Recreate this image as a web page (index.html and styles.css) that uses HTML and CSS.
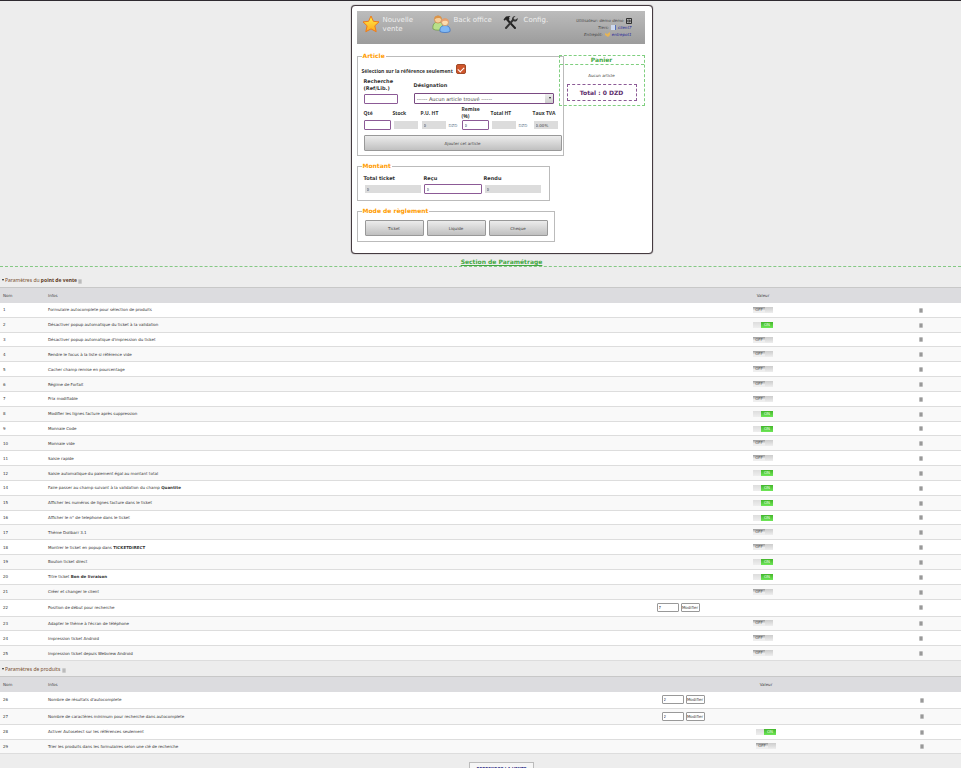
FILE: index.html
```html
<!DOCTYPE html>
<html lang="fr">
<head>
  <meta charset="UTF-8">
  <meta name="viewport" content="width=device-width, initial-scale=1.0">
  <title>Point de vente</title>
  <link rel="stylesheet" href="styles.css">
</head>
<body>

<main class="caisse">
  <header class="menu">
    <a class="menu-link menu-new" href="#">
      <svg width="18" height="18" viewBox="0 0 18 18">
        <defs>
          <linearGradient id="star" x1="0" y1="0" x2="0" y2="1">
            <stop offset="0" stop-color="#fff04a"/>
            <stop offset="1" stop-color="#ffa81c"/>
          </linearGradient>
        </defs>
        <path d="M9 1l2.4 5.3 5.6.6-4.2 3.9 1.4 5.9L9 13.9l-5.2 2.8 1.3-5.9L1 6.9l5.6-.6z" fill="url(#star)" stroke="#ee7a1a" stroke-width="1" stroke-linejoin="round"/>
      </svg>
      <span>Nouvelle vente</span>
    </a>
    <a class="menu-link menu-office" href="#">
      <svg width="19" height="18" viewBox="0 0 19 18">
        <path d="M1 14c-.6-4 1-7 5-7s5 2 5 7c-2 1.600-8 1.600-10 0z" fill="#b9e08a" stroke="#6c9a45" stroke-width=".7"/>
        <circle cx="6" cy="4.500" r="3.600" fill="#f6cf9c" stroke="#c98545" stroke-width=".7"/>
        <path d="M2.400 4.500C2 1 5 .3 7 .8s3 2 2.600 3.700C8 2.600 5 2.600 2.400 4.500z" fill="#dc9448"/>
        <path d="M8 16.500c-.6-4 1.500-6 5-6s5.500 2 5 6c-2 1.400-8 1.400-10 0z" fill="#7fb8f5" stroke="#3a6fc0" stroke-width=".7"/>
        <circle cx="13" cy="7.200" r="3.500" fill="#fbdcae" stroke="#cf8f55" stroke-width=".7"/>
        <path d="M9.500 7C9.500 4 12 3 14 3.500s3 2 2.500 3.500c-2-1.700-4.500-1.700-7 0z" fill="#e8a070"/>
      </svg>
      <span>Back office</span>
    </a>
    <a class="menu-link menu-config" href="#">
      <svg width="15" height="14" viewBox="0 0 15 14">
        <path d="M4.500 5l7.500 8" stroke="#222" stroke-width="2" stroke-linecap="round"/>
        <path d="M3 13l7-8" stroke="#333" stroke-width="2" stroke-linecap="round"/>
        <path d="M.5 4.500L3 1.500 7.500 1 6 2.500 6.500 4 4.500 6 3 4.500 1.500 5.800z" fill="#222"/>
        <path d="M12.500 1l-2 2 .8 1.400 1.500.2L14.600 3c.5 2-1.200 4-3.600 3.500L9 5c-.4-2.500 1.500-4.300 3.500-4z" fill="#333"/>
      </svg>
      <span>Config.</span>
    </a>
    <div class="user">
      <div>Utilisateur: demo demo
        <svg width="6" height="6" viewBox="0 0 6 6"><path d="M.5.500h5v5h-5zM1 3h3M3 1.500L4.500 3 3 4.500" fill="none" stroke="#222" stroke-width=".9"/></svg>
      </div>
      <div>Tiers:
        <svg width="5" height="5" viewBox="0 0 5 5"><path d="M0 0h5v5H0z" fill="#cdd8ee"/><path d="M4 0h1v5H4z" fill="#5570b8"/></svg>
        <a href="#">client7</a></div>
      <div>Entrepôt:
        <svg width="5" height="5" viewBox="0 0 5 5"><path d="M0 1l2 1 3-2v3L3 5 0 3z" fill="#e6b455"/></svg>
        <a href="#">entrepot1</a></div>
    </div>
  </header>

  <div class="content">
    <div class="vente">
      <fieldset class="article">
        <legend>Article</legend>
        <div class="ref-only">
          <label for="refOnly">Sélection sur la référence seulement</label>
          <input type="checkbox" id="refOnly" checked>
        </div>
        <div class="search">
          <label for="recherche">Recherche<br>(Ref/Lib.)</label>
          <label for="designation">Désignation</label>
          <input type="text" id="recherche">
          <select id="designation">
            <option>------ Aucun article trouvé ------</option>
          </select>
        </div>
        <div class="line">
          <label for="qte">Qté</label>
          <label for="stock">Stock</label>
          <label for="pu">P.U. HT</label>
          <label for="remise">Remise<br>(%)</label>
          <label for="totalHt">Total HT</label>
          <label for="tva">Taux TVA</label>
          <input type="text" id="qte">
          <input type="text" id="stock" readonly>
          <div class="money"><input type="text" id="pu" value="0" readonly> DZD</div>
          <input type="text" id="remise" value="0">
          <div class="money"><input type="text" id="totalHt" readonly> DZD</div>
          <input type="text" id="tva" value="0.00%" readonly>
        </div>
        <button type="button" class="btn">Ajouter cet article</button>
      </fieldset>

      <fieldset class="montant">
        <legend>Montant</legend>
        <div class="amounts">
          <label for="total">Total ticket</label>
          <label for="recu">Reçu</label>
          <label for="rendu">Rendu</label>
          <input type="text" id="total" value="0" readonly>
          <input type="text" id="recu" value="0">
          <input type="text" id="rendu" value="0" readonly>
        </div>
      </fieldset>

      <fieldset class="reglement">
        <legend>Mode de règlement</legend>
        <div class="modes">
          <button type="button" class="btn">Ticket</button>
          <button type="button" class="btn">Liquide</button>
          <button type="button" class="btn">Cheque</button>
        </div>
      </fieldset>
    </div>

    <aside class="panier">
      <h2>Panier</h2>
      <p>Aucun article</p>
      <div class="total">Total : 0 DZD</div>
    </aside>
  </div>
</main>

<h1 class="section-title">Section de Paramétrage</h1>

<h3 class="group"><span class="arrow"></span>Paramètres du <b>point de vente</b> <i class="info"></i></h3>
<table class="params params-pos">
  <colgroup><col class="num"><col><col class="form"><col class="val"><col class="help"></colgroup>
  <thead>
    <tr><th>Nom</th><th>Infos</th><th></th><th>Valeur</th><th></th></tr>
  </thead>
  <tbody>
    <tr><td>1</td><td>Formulaire autocomplete pour sélection de produits</td><td></td><td><input type="checkbox" class="switch" aria-label="1"></td><td><i class="info"></i></td></tr>
    <tr><td>2</td><td>Désactiver popup automatique du ticket à la validation</td><td></td><td><input type="checkbox" class="switch" aria-label="2" checked></td><td><i class="info"></i></td></tr>
    <tr><td>3</td><td>Désactiver popup automatique d'impression du ticket</td><td></td><td><input type="checkbox" class="switch" aria-label="3"></td><td><i class="info"></i></td></tr>
    <tr><td>4</td><td>Rendre le focus à la liste si référence vide</td><td></td><td><input type="checkbox" class="switch" aria-label="4"></td><td><i class="info"></i></td></tr>
    <tr><td>5</td><td>Cacher champ remise en pourcentage</td><td></td><td><input type="checkbox" class="switch" aria-label="5"></td><td><i class="info"></i></td></tr>
    <tr><td>6</td><td>Régime de Forfait</td><td></td><td><input type="checkbox" class="switch" aria-label="6"></td><td><i class="info"></i></td></tr>
    <tr><td>7</td><td>Prix modifiable</td><td></td><td><input type="checkbox" class="switch" aria-label="7"></td><td><i class="info"></i></td></tr>
    <tr><td>8</td><td>Modifier les lignes facture après suppression</td><td></td><td><input type="checkbox" class="switch" aria-label="8" checked></td><td><i class="info"></i></td></tr>
    <tr><td>9</td><td>Monnaie Code</td><td></td><td><input type="checkbox" class="switch" aria-label="9" checked></td><td><i class="info"></i></td></tr>
    <tr><td>10</td><td>Monnaie vide</td><td></td><td><input type="checkbox" class="switch" aria-label="10"></td><td><i class="info"></i></td></tr>
    <tr><td>11</td><td>Saisie rapide</td><td></td><td><input type="checkbox" class="switch" aria-label="11"></td><td><i class="info"></i></td></tr>
    <tr><td>12</td><td>Saisie automatique du paiement égal au montant total</td><td></td><td><input type="checkbox" class="switch" aria-label="12" checked></td><td><i class="info"></i></td></tr>
    <tr><td>14</td><td>Faire passer au champ suivant à la validation du champ <b>Quantite</b></td><td></td><td><input type="checkbox" class="switch" aria-label="14" checked></td><td><i class="info"></i></td></tr>
    <tr><td>15</td><td>Afficher les numéros de lignes facture dans le ticket</td><td></td><td><input type="checkbox" class="switch" aria-label="15" checked></td><td><i class="info"></i></td></tr>
    <tr><td>16</td><td>Afficher le n° de telephone dans le ticket</td><td></td><td><input type="checkbox" class="switch" aria-label="16" checked></td><td><i class="info"></i></td></tr>
    <tr><td>17</td><td>Thème Dolibarr 3.1</td><td></td><td><input type="checkbox" class="switch" aria-label="17"></td><td><i class="info"></i></td></tr>
    <tr><td>18</td><td>Montrer le ticket en popup dans <b>TICKETDIRECT</b></td><td></td><td><input type="checkbox" class="switch" aria-label="18"></td><td><i class="info"></i></td></tr>
    <tr><td>19</td><td>Bouton ticket direct</td><td></td><td><input type="checkbox" class="switch" aria-label="19" checked></td><td><i class="info"></i></td></tr>
    <tr><td>20</td><td>Titre ticket <b>Bon de livraison</b></td><td></td><td><input type="checkbox" class="switch" aria-label="20" checked></td><td><i class="info"></i></td></tr>
    <tr><td>21</td><td>Créer et changer le client</td><td></td><td><input type="checkbox" class="switch" aria-label="21"></td><td><i class="info"></i></td></tr>
    <tr><td>22</td><td>Position de début pour recherche</td><td><div class="edit"><input type="text" value="7" aria-label="22"><button type="button">Modifier</button></div></td><td></td><td><i class="info"></i></td></tr>
    <tr><td>23</td><td>Adapter le thème à l'écran de téléphone</td><td></td><td><input type="checkbox" class="switch" aria-label="23"></td><td><i class="info"></i></td></tr>
    <tr><td>24</td><td>Impression ticket Android</td><td></td><td><input type="checkbox" class="switch" aria-label="24"></td><td><i class="info"></i></td></tr>
    <tr><td>25</td><td>Impression ticket depuis Webview Android</td><td></td><td><input type="checkbox" class="switch" aria-label="25"></td><td><i class="info"></i></td></tr>
  </tbody>
</table>

<h3 class="group group-next"><span class="arrow"></span>Paramètres de produits <i class="info"></i></h3>
<table class="params params-products">
  <colgroup><col class="num"><col><col class="form"><col class="val"><col class="help"></colgroup>
  <thead>
    <tr><th>Nom</th><th>Infos</th><th></th><th>Valeur</th><th></th></tr>
  </thead>
  <tbody>
    <tr><td>26</td><td>Nombre de résultats d'autocomplete</td><td><div class="edit"><input type="text" value="2" aria-label="26"><button type="button">Modifier</button></div></td><td></td><td><i class="info"></i></td></tr>
    <tr><td>27</td><td>Nombre de caractères minimum pour recherche dans autocomplete</td><td><div class="edit"><input type="text" value="2" aria-label="27"><button type="button">Modifier</button></div></td><td></td><td><i class="info"></i></td></tr>
    <tr><td>28</td><td>Activer Autoselect sur les références seulement</td><td></td><td><input type="checkbox" class="switch" aria-label="28" checked></td><td><i class="info"></i></td></tr>
    <tr><td>29</td><td>Trier les produits dans les formulaires selon une clé de recherche</td><td></td><td><input type="checkbox" class="switch" aria-label="29"></td><td><i class="info"></i></td></tr>
  </tbody>
</table>

<div class="resume"><a href="#">REPRENDRE LA VENTE</a></div>

</body>
</html>
```

FILE: styles.css
```css
* {
  box-sizing: border-box;
}

body {
  margin: 0;
  border-top: 1px solid #2e2a30;
  background-color: #ededed;
  color: #444;
  font-family: "DejaVu Sans", sans-serif;
  font-size: 4px;
  line-height: 7px;
}

input,
select,
button {
  margin: 0;
  font-family: inherit;
  font-size: 4px;
  color: #444;
}

svg {
  flex: none;
}

/* caisse */
.caisse {
  position: relative;
  left: 21px;
  max-width: 302px;
  margin: 4px auto 0;
  padding: 5px 7px 11px 5px;
  border: 1px solid #453b40;
  border-radius: 4px;
  background-color: #fff;
  box-shadow: 0 0 1px #453b40;
}

.menu {
  display: flex;
  align-items: flex-start;
  height: 33px;
  padding: 4px 13px 0 5px;
  background: linear-gradient(#bcbcbc, #9c9c9c);
}

.menu-link {
  display: flex;
  gap: 3px;
  color: #eee;
  font-size: 7px;
  line-height: 9px;
  text-decoration: none;
}

.menu-link span {
  padding-top: 1px;
}

.menu-new {
  width: 70px;
}

.menu-new span {
  width: 32px;
}

.menu-office {
  width: 71px;
}

.menu-config {
  gap: 6px;
}

.user {
  margin-left: auto;
  padding-top: 2px;
  color: #444;
  font-style: italic;
  white-space: nowrap;
}

.user div {
  display: flex;
  justify-content: flex-end;
  align-items: center;
  gap: 2px;
}

.user a {
  color: #22229a;
  text-decoration: none;
}

.content {
  display: flex;
  align-items: flex-start;
  padding-top: 8px;
}

.vente {
  width: 207px;
}

fieldset {
  margin: 0 0 6px;
  padding: 0 1px 4px 6px;
  border: 1px solid #bbb;
}

legend {
  margin-left: -2px;
  padding: 0 1px;
  color: #ff9c00;
  font-size: 6px;
  font-weight: bold;
  line-height: 8px;
}

.vente label {
  color: #333;
  font-size: 5px;
  font-weight: bold;
}

.vente input[type="text"] {
  width: 100%;
  height: 10px;
  padding: 0 2px;
  border: 1px solid #8c5a96;
  border-radius: 1px;
  background-color: #fff;
}

.vente input[readonly] {
  border-color: #fff;
  background-color: #dcdcdc;
  background-clip: padding-box;
}

.ref-only {
  display: flex;
  gap: 3px;
  margin-left: -2px;
  padding: 4px 0;
}

.ref-only label,
.line label {
  font-family: "Open Sans", sans-serif;
}

.ref-only label {
  align-self: flex-end;
  line-height: 5px;
}

.ref-only input {
  appearance: none;
  display: flex;
  align-items: center;
  justify-content: center;
  width: 10px;
  height: 10px;
  border: 1px solid #a04a28;
  border-radius: 2px;
  background-color: #d0562c;
}

.ref-only input:checked::before {
  content: "";
  width: 5px;
  height: 3px;
  border: solid #fff;
  border-width: 0 0 1px 1px;
  transform: rotate(-45deg);
}

.search {
  position: relative;
  display: grid;
  grid-template-columns: 34px 140px;
  gap: 1px 16px;
  align-items: center;
}

.search select {
  appearance: none;
  width: 100%;
  height: 11px;
  padding: 0 9px 0 2px;
  border: 1px solid #7a4a82;
  border-radius: 1px;
  background: linear-gradient(#eee, #ccc) no-repeat right / 8px 100%, #fff;
  font-size: 5px;
}

/* arrow of the drop-down */
.search::after {
  content: "";
  position: absolute;
  left: 185px;
  bottom: 4px;
  border: 1px solid transparent;
  border-top: 2px solid #222;
}

.line {
  display: grid;
  grid-template-columns: 27px 26px 39px 27px 40px 26px;
  column-gap: 2px;
  align-items: center;
  margin: 2px 0 5px;
}

.money {
  display: flex;
  gap: 2px;
  align-items: center;
  color: #6a7f95;
}

.money input[type="text"] {
  width: 26px;
}

.btn {
  display: block;
  width: 100%;
  height: 16px;
  padding: 0;
  border: 1px solid #999;
  border-radius: 1px;
  background: linear-gradient(#ececec, #c0c0c0);
}

.montant {
  width: 193px;
  padding-bottom: 6px;
}

.amounts {
  display: grid;
  grid-template-columns: repeat(3, 58px);
  gap: 2px;
  padding-top: 5px;
}

.reglement {
  width: 198px;
  margin: 0;
  padding-bottom: 5px;
}

.modes {
  display: flex;
  gap: 3px;
  padding: 5px 5px 0 1px;
}

/* panier */
.panier {
  flex: 1;
  margin: 3px 0 0 -5px;
  padding-bottom: 4px;
  border: 1px dashed #7fcf7f;
  text-align: center;
}

.panier h2 {
  margin: 0;
  border-bottom: 1px dashed #7fcf7f;
  color: #43a743;
  font-size: 6px;
  line-height: 8px;
}

.panier p {
  margin: 7px 0 5px;
}

.panier .total {
  margin: 0 7px;
  border: 1px dashed #8c5a96;
  color: #5c2d6b;
  font-size: 6px;
  font-weight: bold;
  line-height: 15px;
}

.section-title {
  margin: 4px 0 0;
  padding-left: 42px;
  border-bottom: 1px dashed #84c884;
  color: #43a743;
  font-size: 6px;
  line-height: 8px;
  text-align: center;
  text-decoration: underline;
}

/* parametres */
.group {
  margin: 0;
  padding: 9px 2px 3px;
  color: #7a5030;
  font-family: "Noto Sans", sans-serif;
  font-size: 5px;
  font-weight: normal;
  line-height: 8px;
}

.group-next {
  padding-top: 4px;
}

.group b {
  color: #5c3a1e;
}

.arrow {
  display: inline-block;
  margin-right: 1px;
  border: 1px solid transparent;
  border-top: 2px solid #222;
}

.info {
  display: inline-block;
  width: 4px;
  height: 5px;
  border: 1px solid #bbb;
  border-radius: 1px;
  background-color: #999;
  vertical-align: middle;
}

.group .info {
  border-color: #ccc;
  background-color: #bbb;
  vertical-align: -2px;
}

.params {
  width: 100%;
  border-spacing: 0;
  table-layout: fixed;
}

.params-pos {
  height: 374px;
}

.params-products {
  height: 78px;
}

.params .num {
  width: 46px;
}

.params .form {
  width: 90px;
}

.params .val {
  width: 80px;
}

.params .help {
  width: 158px;
}

.params-products .form {
  width: 88px;
}

.params-products .val {
  width: 78px;
}

.params-products .help {
  width: 156px;
}

.params th {
  height: 16px;
  padding: 0 2px;
  border-top: 1px solid #c8c8c8;
  background-color: #dcdcdf;
  font-weight: normal;
  text-align: left;
}

.params td {
  height: 14px;
  padding: 1px 2px 0;
  border-bottom: 1px solid #ddd;
  color: #333;
  line-height: 6px;
}

.params td:first-child,
.params th:first-child {
  padding-left: 3px;
}

.params tbody tr {
  background-color: #fff;
}

.params tbody tr:nth-child(even) {
  background-color: #f9f9f9;
}

.params td:nth-child(n+3),
.params th:nth-child(n+3) {
  padding: 0;
  text-align: center;
}

.params td:last-child {
  padding: 1px 0 0 78px;
}

.switch {
  appearance: none;
  display: block;
  width: 20px;
  height: 6px;
  margin: 0 auto;
  background: linear-gradient(#ccc, #eee) no-repeat right / 8px 100%, linear-gradient(#999, #eee 60%);
  color: #555;
  line-height: 6px;
}

.switch::before {
  content: "OFF";
  display: block;
  width: 12px;
  text-align: center;
}

.switch:checked {
  background: linear-gradient(#ddd, #eee) no-repeat left / 8px 100%, linear-gradient(#43b52b, #6fe858);
  color: #e6ffe0;
}

.switch:checked::before {
  content: "ON";
  margin-left: 8px;
}

.edit {
  display: flex;
  justify-content: center;
  gap: 2px;
  padding: 3px 0;
}

.edit input,
.edit button {
  width: 22px;
  height: 9px;
  padding: 0 1px;
  border: 1px solid #999;
  border-radius: 1px;
  background-color: #fff;
}

.edit button {
  width: 19px;
  padding: 0;
}

.resume {
  padding: 8px 0 0 42px;
  text-align: center;
}

.resume a {
  display: inline-block;
  padding: 2px 6px;
  border: 1px solid #bbb;
  background-color: #f6f6f6;
  color: #3a3a8c;
  font-weight: bold;
  text-decoration: none;
}
```
